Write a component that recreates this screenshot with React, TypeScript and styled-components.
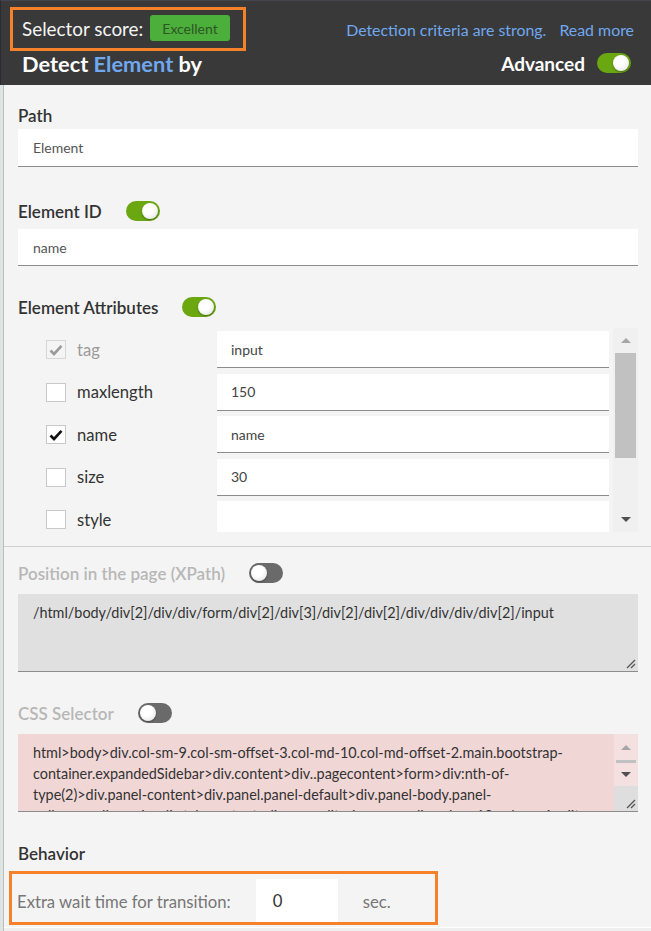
import React from 'react'
import styled, { createGlobalStyle } from 'styled-components'

const GlobalStyle = createGlobalStyle`
  html, body {
    margin: 0;
    padding: 0;
    background: #efefef;
    font-family: Lato, "Open Sans", "Liberation Sans", sans-serif;
  }
  * {
    box-sizing: border-box;
  }
`

const Page = styled.div`
  width: 651px;
  height: 931px;
  display: flex;
  flex-direction: column;
  overflow: hidden;
  background: #efefef;
`

const Header = styled.header`
  height: 85px;
  flex-shrink: 0;
  background: #393939;
  border-top: 1px solid #45454d;
  border-left: 1px solid #2a2a33;
`

const HeaderTop = styled.div`
  height: 44px;
  margin-top: 6px;
  padding: 0 17px 0 9px;
  display: flex;
  align-items: center;
  justify-content: space-between;
`

const ScoreBox = styled.div`
  height: 44px;
  border: 3px solid #f5822a;
  display: flex;
  align-items: center;
  gap: 7px;
  padding: 0 13px 2px 9px;
  color: #f4f4f4;
  font-size: 18.9px;
`

const Badge = styled.span`
  height: 26px;
  padding: 0 12px;
  border-radius: 3px;
  background: #4cae3b;
  color: #2c5624;
  font-size: 14px;
  display: inline-flex;
  align-items: center;
`

const HeaderLinks = styled.div`
  display: flex;
  gap: 13px;
  font-size: 15.9px;
  color: #70a8f0;
`

const HeaderBottom = styled.div`
  height: 24px;
  padding: 0 20px 0 21px;
  display: flex;
  align-items: center;
  justify-content: space-between;
`

const Title = styled.h1`
  margin: 0;
  font-size: 21.8px;
  font-weight: 700;
  color: #ffffff;
`

const Accent = styled.span`
  color: #70a8f0;
`

const AdvancedWrap = styled.div`
  display: flex;
  align-items: center;
  gap: 12px;
  font-size: 19px;
  font-weight: 700;
  color: #ffffff;
`

const Body = styled.div`
  flex: 1;
  display: flex;
  min-height: 0;
`

const Strip = styled.div`
  width: 4px;
  flex-shrink: 0;
  background: #dde4e1;
  border-right: 1px solid #bdbdbd;
`

const Panel = styled.main`
  flex: 1;
  background: #f4f4f4;
  padding: 18px 13px 0 14px;
  margin-bottom: 3px;
  border-bottom: 1px solid #ffffff;
`

const LabelRow = styled.div<{ $mb: number }>`
  height: 24px;
  margin-bottom: ${(p) => p.$mb}px;
  display: flex;
  align-items: center;
  gap: 24px;
`

const Label = styled.span<{ $muted?: boolean }>`
  font-size: 17px;
  font-weight: 600;
  color: ${(p) => (p.$muted ? '#b7b7b7' : '#333333')};
`

const Field = styled.div<{ $h: number; $mb: number }>`
  height: ${(p) => p.$h}px;
  margin-bottom: ${(p) => p.$mb}px;
  background: #ffffff;
  border-bottom: 1px solid #8c8c8c;
  padding-left: 15px;
  display: flex;
  align-items: center;
  font-size: 14px;
  color: #555555;
`

const ToggleTrack = styled.span<{ $on: boolean }>`
  position: relative;
  width: 34px;
  height: 20px;
  flex-shrink: 0;
  border-radius: 10px;
  background: ${(p) => (p.$on ? '#6aa711' : '#6a6a6a')};
`

const ToggleKnob = styled.span<{ $on: boolean }>`
  position: absolute;
  top: 2px;
  left: ${(p) => (p.$on ? '16px' : '2px')};
  width: 16px;
  height: 16px;
  border-radius: 50%;
  background: radial-gradient(circle at 40% 35%, #ffffff 40%, #dcdcdc 100%);
  box-shadow: 0 1px 2px rgba(0, 0, 0, 0.35);
`

const Toggle: React.FC<{ on: boolean }> = ({ on }) => (
  <ToggleTrack $on={on}>
    <ToggleKnob $on={on} />
  </ToggleTrack>
)

const AttrList = styled.div`
  height: 204px;
  margin-bottom: 14px;
  display: grid;
  grid-template-columns: 1fr 25px;
  column-gap: 4px;
  overflow: hidden;
`

const AttrRows = styled.div`
  padding-top: 3px;
  display: flex;
  flex-direction: column;
  gap: 5.5px;
  overflow: hidden;
`

const AttrRow = styled.div`
  height: 37px;
  flex-shrink: 0;
  display: flex;
  align-items: center;
  padding-left: 28px;
`

const Box = styled.span<{ $disabled?: boolean }>`
  width: 20px;
  height: 19px;
  flex-shrink: 0;
  border: 1px solid ${(p) => (p.$disabled ? '#d6d6d6' : '#c9c9c9')};
  background: ${(p) => (p.$disabled ? '#f4f4f4' : '#ffffff')};
  display: flex;
  align-items: center;
  justify-content: center;
`

const AttrName = styled.span<{ $disabled?: boolean }>`
  width: 140px;
  margin-left: 11px;
  font-size: 16.6px;
  color: ${(p) => (p.$disabled ? '#9a9a9a' : '#333333')};
`

const AttrValue = styled.div`
  flex: 1;
  height: 100%;
  background: #ffffff;
  border-bottom: 1px solid #8c8c8c;
  padding-left: 14px;
  display: flex;
  align-items: center;
  font-size: 14px;
  color: #444444;
`

const ScrollTrack = styled.div<{ $bg: string }>`
  display: flex;
  flex-direction: column;
  background: ${(p) => p.$bg};
`

const ArrowButton = styled.div<{ $h: number }>`
  height: ${(p) => p.$h}px;
  flex-shrink: 0;
  display: flex;
  align-items: center;
  justify-content: center;
`

const Arrow = styled.span<{ $up?: boolean; $color: string }>`
  width: 0;
  height: 0;
  border-left: 5px solid transparent;
  border-right: 5px solid transparent;
  ${(p) =>
    p.$up
      ? `border-bottom: 5px solid ${p.$color};`
      : `border-top: 5px solid ${p.$color};`}
`

const Thumb = styled.div<{ $h: number }>`
  height: ${(p) => p.$h}px;
  margin: 0 2px;
  flex-shrink: 0;
  background: #c1c1c1;
`

const Spacer = styled.div`
  flex: 1;
`

const Corner = styled.div`
  height: 25px;
  flex-shrink: 0;
  background: #dedede;
`

const Separator = styled.hr`
  margin: 0 -13px 14px -14px;
  border: none;
  border-top: 1px solid #cfcfcf;
  height: 0;
`

const TextBox = styled.div<{ $bg: string; $mb: number }>`
  position: relative;
  height: 78px;
  margin-bottom: ${(p) => p.$mb}px;
  background: ${(p) => p.$bg};
  border-bottom: 1px solid #8c8c8c;
  display: flex;
  overflow: hidden;
`

const TextContent = styled.div<{ $pt: number }>`
  flex: 1;
  padding: ${(p) => p.$pt}px 15px 0 15px;
  font-size: 14.4px;
  line-height: 21px;
  color: #333333;
  white-space: nowrap;
  overflow: hidden;
`

const Grip = styled.svg`
  position: absolute;
  right: 2px;
  bottom: 2px;
`

const ResizeGrip = () => (
  <Grip width="11" height="11" viewBox="0 0 11 11">
    <line x1="10" y1="2" x2="2" y2="10" stroke="#555" strokeWidth="1.2" />
    <line x1="10" y1="6" x2="6" y2="10" stroke="#555" strokeWidth="1.2" />
  </Grip>
)

const WaitBox = styled.div`
  width: 429px;
  height: 54px;
  margin-left: -9px;
  border: 3px solid #f5822a;
  display: flex;
  align-items: center;
  padding: 8px 0 0 5px;
  font-size: 16.7px;
  color: #777777;
`

const WaitInput = styled.div`
  width: 82px;
  height: 43px;
  margin-left: 25px;
  align-self: flex-end;
  background: #ffffff;
  padding-left: 17px;
  display: flex;
  align-items: center;
  color: #333333;
`

const Unit = styled.span`
  margin-left: 25px;
`

const CheckMark: React.FC<{ color: string }> = ({ color }) => (
  <svg width="14" height="12" viewBox="0 0 14 12">
    <path d="M1.5 6.5 L5 10 L12.5 1.8" fill="none" stroke={color} strokeWidth="2.6" />
  </svg>
)

type Attr = { name: string; value: string; checked?: boolean; disabled?: boolean }

const attrs: Attr[] = [
  { name: 'tag', value: 'input', checked: true, disabled: true },
  { name: 'maxlength', value: '150' },
  { name: 'name', value: 'name', checked: true },
  { name: 'size', value: '30' },
  { name: 'style', value: '' },
]

const cssLines = [
  'html>body>div.col-sm-9.col-sm-offset-3.col-md-10.col-md-offset-2.main.bootstrap-',
  'container.expandedSidebar>div.content>div..pagecontent>form>div:nth-of-',
  'type(2)>div.panel-content>div.panel.panel-default>div.panel-body.panel-',
  'collapse.collapse.in>div.tab-content>div.row.edit-view-row>div.col-xs-12.col-sm-6.edit-',
]

export default function App() {
  return (
    <>
      <GlobalStyle />
      <Page>
        <Header>
          <HeaderTop>
            <ScoreBox>
              Selector score:
              <Badge>Excellent</Badge>
            </ScoreBox>
            <HeaderLinks>
              <span>Detection criteria are strong.</span>
              <span>Read more</span>
            </HeaderLinks>
          </HeaderTop>
          <HeaderBottom>
            <Title>
              Detect <Accent>Element</Accent> by
            </Title>
            <AdvancedWrap>
              Advanced
              <Toggle on />
            </AdvancedWrap>
          </HeaderBottom>
        </Header>
        <Body>
          <Strip />
          <Panel>
            <LabelRow $mb={2}>
              <Label>Path</Label>
            </LabelRow>
            <Field $h={38} $mb={32}>Element</Field>

            <LabelRow $mb={6}>
              <Label>Element ID</Label>
              <Toggle on />
            </LabelRow>
            <Field $h={37} $mb={29}>name</Field>

            <LabelRow $mb={9}>
              <Label>Element Attributes</Label>
              <Toggle on />
            </LabelRow>
            <AttrList>
              <AttrRows>
                {attrs.map((a) => (
                  <AttrRow key={a.name}>
                    <Box $disabled={a.disabled}>
                      {a.checked && <CheckMark color={a.disabled ? '#9a9a9a' : '#111'} />}
                    </Box>
                    <AttrName $disabled={a.disabled}>{a.name}</AttrName>
                    <AttrValue>{a.value}</AttrValue>
                  </AttrRow>
                ))}
              </AttrRows>
              <ScrollTrack $bg="#f0f0f0">
                <ArrowButton $h={25}>
                  <Arrow $up $color="#a6a6a6" />
                </ArrowButton>
                <Thumb $h={105} />
                <Spacer />
                <ArrowButton $h={25}>
                  <Arrow $color="#505050" />
                </ArrowButton>
              </ScrollTrack>
            </AttrList>

            <Separator />

            <LabelRow $mb={9}>
              <Label $muted>Position in the page (XPath)</Label>
              <Toggle on={false} />
            </LabelRow>
            <TextBox $bg="#e0e0e0" $mb={29}>
              <TextContent $pt={8}>
                /html/body/div[2]/div/div/form/div[2]/div[3]/div[2]/div[2]/div/div/div/div[2]/input
              </TextContent>
              <ResizeGrip />
            </TextBox>

            <LabelRow $mb={9}>
              <Label $muted>CSS Selector</Label>
              <Toggle on={false} />
            </LabelRow>
            <TextBox $bg="#f1d6d6" $mb={29}>
              <TextContent $pt={8}>
                {cssLines.map((l) => (
                  <div key={l}>{l}</div>
                ))}
              </TextContent>
              <ScrollTrack $bg="rgba(255,255,255,0.25)" style={{ width: 24 }}>
                <ArrowButton $h={26}>
                  <Arrow $up $color="#a6a6a6" />
                </ArrowButton>
                <Thumb $h={3} />
                <ArrowButton $h={22}>
                  <Arrow $color="#505050" />
                </ArrowButton>
                <Spacer />
                <Corner />
              </ScrollTrack>
              <ResizeGrip />
            </TextBox>

            <LabelRow $mb={6}>
              <Label>Behavior</Label>
            </LabelRow>
            <WaitBox>
              Extra wait time for transition:
              <WaitInput>0</WaitInput>
              <Unit>sec.</Unit>
            </WaitBox>
          </Panel>
        </Body>
      </Page>
    </>
  )
}
